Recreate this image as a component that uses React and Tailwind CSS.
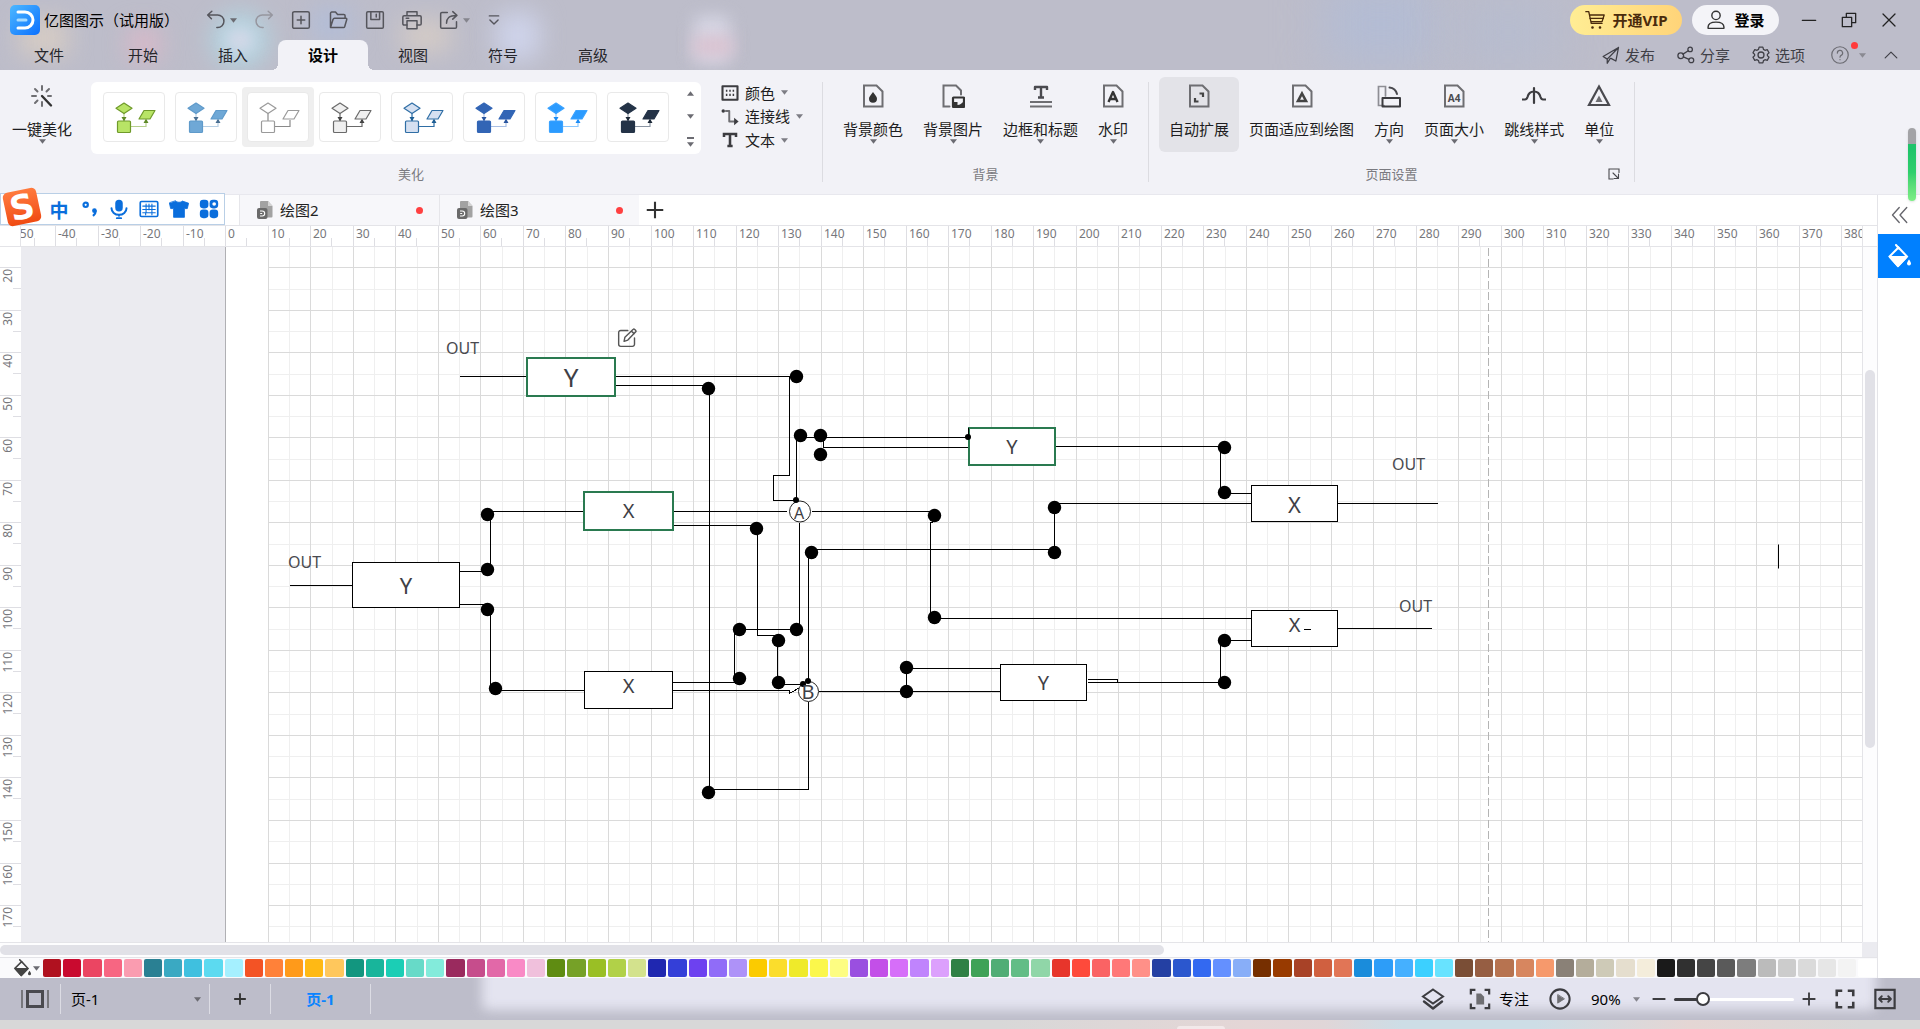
import React from "react";

/* ---------- shared icon helpers ---------- */

function Icon({ children, className = "h-5 w-5", sw = 1.5, box = 24 }) {
  return (
    <svg
      viewBox={`0 0 ${box} ${box}`}
      className={`shrink-0 ${className}`}
      fill="none"
      stroke="currentColor"
      strokeWidth={sw}
      strokeLinecap="round"
      strokeLinejoin="round"
      aria-hidden="true"
    >
      {children}
    </svg>
  );
}

function Caret({ className = "text-[#6b6b72]" }) {
  return (
    <svg viewBox="0 0 8 5" className={`h-[5px] w-[7px] shrink-0 ${className}`} fill="currentColor" aria-hidden="true">
      <path d="M0 0h8L4 5z" />
    </svg>
  );
}

function PageOutline({ children }) {
  return (
    <Icon className="h-6 w-6 text-[#6e6e72]" sw={2}>
      <path d="M3 1.500h12.500l6 6v15H3z" strokeLinejoin="miter" />
      {children}
    </Icon>
  );
}

/* ---------- title bar ---------- */

const QUICK = [
  {
    name: "新建",
    art: (
      <>
        <rect x="2" y="2" width="20" height="20" rx="2" />
        <path d="M12 7.500v9M7.500 12h9" />
      </>
    ),
  },
  {
    name: "打开",
    art: <path d="M3 21V4a1.500 1.500 0 0 1 1.500-1.500H9l2.500 3H19A1.500 1.500 0 0 1 20.500 7v3M3 21l3-9.500A2 2 0 0 1 8 10h13.500a1 1 0 0 1 1 1.400L20 20a1.500 1.500 0 0 1-1.500 1H3z" />,
  },
  {
    name: "保存",
    art: (
      <>
        <rect x="2" y="2" width="20" height="20" rx="1.500" />
        <path d="M7 2v9.500h10.500V2M13.500 5v3.500" />
      </>
    ),
  },
  {
    name: "打印",
    art: (
      <>
        <path d="M6 7V2h12v5M6 18H2.500A1.500 1.500 0 0 1 1 16.500v-8A1.500 1.500 0 0 1 2.500 7h19A1.500 1.500 0 0 1 23 8.500v8a1.500 1.500 0 0 1-1.500 1.500H18" />
        <rect x="6" y="13" width="12" height="9.500" />
        <path d="M5 10h3" />
      </>
    ),
  },
];

function TitleGlow() {
  return (
    <div aria-hidden="true" className="pointer-events-none absolute inset-0 overflow-hidden">
      <div className="absolute top-5 left-5 h-9 w-12 bg-[#d6ccc4] blur-md" />
      <div className="absolute top-7 left-32 h-8 w-8 bg-[#d9b9c8] blur-md" />
      <div className="absolute top-3 left-[212px] h-14 w-14 rounded-full bg-[#b3d6e2] blur-md" />
      <div className="absolute top-7 left-[226px] h-6 w-7 rounded-full bg-[#d6d8e8] blur-sm" />
      <div className="absolute top-2 left-[312px] h-8 w-10 bg-[#b2bdd8] blur-md" />
      <div className="absolute top-5 left-[402px] h-8 w-12 bg-[#d4cbc6] blur-md" />
      <div className="absolute top-3 left-[496px] h-12 w-11 rounded-xl bg-[#ced3ea] blur-md" />
      <div className="absolute top-4 left-[694px] h-12 w-9 rounded-md bg-[#d6d6e4] blur-sm" />
      <div className="absolute top-9 left-[693px] h-5 w-10 bg-[#dac2d0] blur-sm" />
      <div className="absolute -top-4 left-[1325px] h-20 w-28 bg-[#b3bcd4] blur-xl" />
      <div className="absolute top-0 left-[1460px] h-16 w-24 bg-[#b6bccf] blur-xl" />
    </div>
  );
}

function TitleBar() {
  return (
    <div className="relative flex h-10 items-center pr-[11px] pl-[10px]">
      <svg viewBox="0 0 30 30" className="h-[30px] w-[30px] shrink-0" aria-hidden="true">
        <defs>
          <linearGradient id="brand" x1="0" y1="0" x2="1" y2="1">
            <stop offset="0" stopColor="#4db8ff" />
            <stop offset="1" stopColor="#0a70ff" />
          </linearGradient>
        </defs>
        <rect width="30" height="30" rx="5" fill="url(#brand)" />
        <path d="M8 7h7a8 8 0 0 1 0 16H8" fill="none" stroke="#fff" strokeWidth="3" strokeLinecap="round" />
        <path d="M8 15h8" stroke="#a8dcff" strokeWidth="3" strokeLinecap="round" />
      </svg>
      <h1 className="ml-1 text-[15px] whitespace-nowrap text-black">亿图图示（试用版）</h1>
      <div className="ml-[27px] flex items-center gap-[17px] text-[#55555c]">
        <button aria-label="撤销" className="flex items-center gap-1">
          <Icon sw={1.8}>
            <path d="M6.500 10.500L2 6l5-4.500M2.500 6H14a7 7 0 0 1 0 15h-1" />
          </Icon>
          <Caret />
        </button>
        <button aria-label="重做" className="text-[#96969f]">
          <Icon sw={1.8}>
            <path d="M17.500 10.500L22 6l-5-4.500M21.500 6H10a7 7 0 0 0 0 15h1" />
          </Icon>
        </button>
        {QUICK.map((q) => (
          <button key={q.name} aria-label={q.name}>
            <Icon sw={1.8}>{q.art}</Icon>
          </button>
        ))}
        <button aria-label="导出" className="flex items-center gap-1">
          <Icon sw={1.8}>
            <path d="M10 3H3.500A1.500 1.500 0 0 0 2 4.500v16A1.500 1.500 0 0 0 3.500 22h16a1.500 1.500 0 0 0 1.500-1.500V14M9 16c0-6 3-9.500 12-9.500M16.500 2l5 4.500-5 4.500" />
          </Icon>
          <Caret className="text-[#85858d]" />
        </button>
        <button aria-label="更多">
          <Icon className="h-[14px] w-[14px]" sw={2.4}>
            <path d="M4 5h16M5 12l7 7 7-7" />
          </Icon>
        </button>
      </div>
      <div className="ml-auto flex items-center gap-[10px]">
        <button className="flex h-[30px] w-28 items-center justify-center gap-2 rounded-full bg-linear-to-r from-[#ffed94] to-[#ffd479] text-[15px] font-bold text-[#4a2b0c]">
          <Icon className="h-5 w-5" sw={1.6}>
            <path d="M1 2h3.500l3 14h13M5.500 6H23l-2.500 8H7" />
            <path d="M6 10h16" />
            <circle cx="9" cy="21" r=".8" fill="currentColor" />
            <circle cx="18" cy="21" r=".8" fill="currentColor" />
          </Icon>
          开通VIP
        </button>
        <button className="flex h-[30px] w-[87px] items-center justify-center gap-2 rounded-full bg-[#f4f4f8] text-[15px] font-bold text-black">
          <Icon className="h-5 w-5 text-[#333]" sw={1.7}>
            <circle cx="12" cy="6.500" r="5" />
            <path d="M2.500 22v-1.500c0-4 4-6 9.500-6s9.500 2 9.500 6V22z" />
          </Icon>
          登录
        </button>
        <div className="flex text-[#222]">
          <button aria-label="最小化" className="flex h-8 w-10 items-center justify-center">
            <Icon className="h-4 w-4" sw={2}>
              <path d="M2 12.500h20" />
            </Icon>
          </button>
          <button aria-label="还原" className="flex h-8 w-10 items-center justify-center">
            <Icon className="h-4 w-4" sw={1.9}>
              <path d="M2 8h14v14H2zM8 8V2h14v14h-6" />
            </Icon>
          </button>
          <button aria-label="关闭" className="flex h-8 w-10 items-center justify-center">
            <Icon className="h-4 w-4" sw={1.9}>
              <path d="M3 3l18 18M21 3L3 21" />
            </Icon>
          </button>
        </div>
      </div>
    </div>
  );
}

const MENU = ["开始", "插入", "设计", "视图", "符号", "高级"];

function MenuTabs() {
  return (
    <div className="relative flex h-[30px] items-stretch pr-[22px] text-[15px] text-[#26262b]">
      <nav className="flex">
        <button className="w-[98px]">文件</button>
        {MENU.map((m) =>
          m === "设计" ? (
            <button
              key={m}
              className="relative w-[90px] rounded-t-lg bg-[#f2f2f7] font-bold text-black before:absolute before:bottom-0 before:-left-1.5 before:h-1.5 before:w-1.5 before:bg-[radial-gradient(circle_at_0_0,transparent_6px,#f2f2f7_6px)] after:absolute after:-right-1.5 after:bottom-0 after:h-1.5 after:w-1.5 after:bg-[radial-gradient(circle_at_100%_0,transparent_6px,#f2f2f7_6px)]"
            >
              {m}
            </button>
          ) : (
            <button key={m} className="w-[90px]">
              {m}
            </button>
          )
        )}
      </nav>
      <div className="ml-auto flex items-center gap-[22px] text-[#3f3f46]">
        <button className="flex items-center gap-[5px]">
          <Icon className="h-[18px] w-[18px]" sw={1.7}>
            <path d="M22 2L1.500 14l5.500 3.500L22 2l-3.500 18-6.500-3.500M7 17.500V23l4-6.500" />
          </Icon>
          发布
        </button>
        <button className="flex items-center gap-[5px]">
          <Icon className="h-[18px] w-[18px]" sw={1.7}>
            <circle cx="5" cy="13" r="3.800" />
            <circle cx="17.500" cy="4.500" r="3" />
            <circle cx="19" cy="19" r="3.300" />
            <path d="M8 10.800l7-4.500M8.500 14.500l7.500 3.300" />
          </Icon>
          分享
        </button>
        <button className="flex items-center gap-[5px]">
          <Icon className="h-[18px] w-[18px]" sw={1.7}>
            <circle cx="12" cy="12" r="4" />
            <path d="M9.500 1.500h5l.8 3 2 1.200 3-.9 2.400 4.200-2.200 2.200v1.600l2.200 2.200-2.400 4.200-3-.9-2 1.200-.8 3h-5l-.8-3-2-1.200-3 .9L1.300 15l2.200-2.200v-1.600L1.300 9l2.400-4.200 3 .9 2-1.200z" />
          </Icon>
          选项
        </button>
        <button aria-label="帮助" className="relative ml-1 flex items-center gap-[10px] text-[#6b6b72]">
          <Icon className="h-[18px] w-[18px]" sw={1.6}>
            <circle cx="12" cy="12" r="11" />
            <path d="M8.500 9.500a3.500 3.500 0 1 1 5 3c-1 .6-1.500 1.200-1.500 2.500M12 18v.3" />
          </Icon>
          <span className="absolute -top-1 left-5 h-[7px] w-[7px] rounded-full bg-[#ff3b3b]" />
          <Caret className="text-[#8a8a92]" />
        </button>
        <button aria-label="收起功能区" className="-ml-1">
          <Icon className="h-[14px] w-[14px]" sw={2}>
            <path d="M2 17L12 7l10 10" />
          </Icon>
        </button>
      </div>
    </div>
  );
}

/* ---------- ribbon ---------- */

const THEMES = [
  { fill: "#b8e466", stroke: "#6f9a2a", line: "#b7cf8e", tip: "#5f8a28" },
  { fill: "#6fa8d6", stroke: "#5f9aca", line: "#b7cfe4", tip: "#4a6f92" },
  { fill: "#ffffff", stroke: "#9a9a9a", line: "#8a8a8a", tip: "none", selected: true },
  { fill: "#f0f0f0", stroke: "#6a6a6a", line: "#6a6a6a", tip: "#444444" },
  { fill: "#d5e0f1", stroke: "#2f6ea5", line: "#2f6ea5", tip: "#1f5f95" },
  { fill: "#3265b5", stroke: "#3265b5", line: "#a9bfe4", tip: "#2a56a0" },
  { fill: "#2b9bff", stroke: "#3aa2ff", line: "#8cc8ff", tip: "#1d8cf5" },
  { fill: "#243347", stroke: "#243347", line: "#8b95a3", tip: "#1b2736" },
];

function ThemeArt({ t }) {
  return (
    <svg viewBox="0 0 60 48" className="h-12 w-[60px]" aria-hidden="true">
      <path d="M20 20v9M27 33.500h15V27" fill="none" stroke={t.line} strokeWidth="1.200" />
      <path d="M17.500 24h5L20 28.500zM39.500 30h5L42 25.500z" fill={t.tip} />
      <g fill={t.fill} stroke={t.stroke} strokeWidth="1.200" strokeLinejoin="round">
        <path d="M20 10l8 5.300-8 5.300-8-5.300z" />
        <rect x="13.500" y="28" width="13" height="11.500" rx="1" />
        <path d="M40 17.500h11l-5 8.500H35z" />
      </g>
    </svg>
  );
}

function RibbonButton({ label, icon, caret = true, active = false }) {
  return (
    <button
      className={`flex h-[75px] flex-col items-center rounded-md px-[10px] pt-[7px] text-[15px] leading-5 whitespace-nowrap text-[#1d1d21] ${
        active ? "bg-[#e3e3e8]" : ""
      }`}
    >
      {icon}
      <span className="mt-[11px]">{label}</span>
      {caret && <Caret />}
    </button>
  );
}

function Group({ label, children, launcher = false, className = "" }) {
  return (
    <section aria-label={label} className={`flex flex-col pt-[7px] ${className}`}>
      <div className="flex h-[75px]">{children}</div>
      <div className="mt-3 grid grid-cols-[1fr_auto_1fr] items-center text-[13px] leading-5 text-[#7a7a80]">
        <span />
        <span>{label}</span>
        {launcher ? (
          <button aria-label="页面设置选项" className="mr-1 justify-self-end text-[#4a4a4f]">
            <Icon className="h-3 w-3" sw={2.2}>
              <path d="M22 9V2H2v20h8" strokeLinejoin="miter" />
              <path d="M10 10l10 10M21 12v9h-9" />
            </Icon>
          </button>
        ) : (
          <span />
        )}
      </div>
    </section>
  );
}

const Divider = () => <div className="mt-3 h-[100px] w-px shrink-0 bg-[#dcdce1]" />;

const SMALL_TOOLS = [
  {
    name: "颜色",
    art: (
      <>
        <rect x="2" y="3" width="20" height="18" strokeWidth="2.800" />
        <path d="M6.500 9h2M11 9h2M15.500 9h2M6.500 14.500h2M11 14.500h2M15.500 14.500h2" strokeWidth="2.800" strokeLinecap="butt" />
      </>
    ),
  },
  {
    name: "连接线",
    art: (
      <>
        <path d="M6.500 4H11v14h7" stroke="#6e6e72" strokeWidth="2.600" />
        <circle cx="3" cy="4" r="2.300" fill="currentColor" stroke="none" />
        <path d="M17.500 13l6 5-6 5z" fill="currentColor" stroke="none" />
      </>
    ),
  },
  {
    name: "文本",
    art: <path d="M4 8V4h16v4M12 4v16M8.500 20h7" strokeWidth="3.400" strokeLinecap="butt" strokeLinejoin="miter" />,
  },
];

function Ribbon() {
  return (
    <div className="flex h-[125px] shrink-0 border-b border-[#e8e8ee] bg-[#f2f2f7]">
      <Group label="美化" className="w-[822px] shrink-0">
        <div className="ml-[2px] flex w-20 justify-center">
          <RibbonButton
            label="一键美化"
            icon={
              <Icon className="h-6 w-6 text-[#6e6e72]" sw={2}>
                <path d="M12 2v4M12 18v4M2 12h4M18 12h3M5 5l2.500 2.500M19 5l-2.500 2.500M5 19l2.500-2.500" />
                <path d="M12 12l9 9.500" stroke="#333" strokeWidth="2.400" />
              </Icon>
            }
          />
        </div>
        <div className="mt-[5px] ml-[9px] flex h-[72px] items-start rounded-md bg-white px-[7px] pt-[5px]">
          {THEMES.map((t, i) => (
            <button
              key={i}
              aria-label={`主题 ${i + 1}`}
              className={`flex h-[60px] w-[72px] items-center justify-center rounded ${t.selected ? "bg-[#efefef]" : ""}`}
            >
              <span className="flex h-[50px] w-[62px] items-center justify-center rounded border border-[#e9e9e9] bg-white">
                <ThemeArt t={t} />
              </span>
            </button>
          ))}
          <div className="flex h-[60px] w-5 flex-col items-end justify-between pt-1 text-[#6b6b72]">
            <button aria-label="上一行" className="rotate-180">
              <Caret />
            </button>
            <button aria-label="下一行">
              <Caret />
            </button>
            <button aria-label="展开主题库" className="flex flex-col items-center gap-[3px]">
              <span className="h-[2px] w-[7px] bg-[#6b6b72]" />
              <Caret />
            </button>
          </div>
        </div>
        <div className="mt-1 ml-5 flex flex-col text-[15px] text-[#1d1d21]">
          {SMALL_TOOLS.map((s) => (
            <button key={s.name} className="flex h-6 items-center gap-[6px]">
              <Icon className="h-[18px] w-[18px] text-[#3c3c40]">{s.art}</Icon>
              {s.name}
              <Caret className="text-[#7d7d84]" />
            </button>
          ))}
        </div>
      </Group>
      <Divider />
      <Group label="背景" className="px-[10px]">
        <RibbonButton
          label="背景颜色"
          icon={
            <PageOutline>
              <path d="M12 8c2.500 3.300 4 4.800 4 6.800a4 4 0 0 1-8 0c0-2 1.500-3.500 4-6.800z" fill="#333" stroke="none" />
            </PageOutline>
          }
        />
        <RibbonButton
          label="背景图片"
          icon={
            <Icon className="h-6 w-6 text-[#6e6e72]" sw={2}>
              <path d="M8.500 22.500H2.500v-21H15l5 5v4" strokeLinejoin="miter" />
              <rect x="12" y="13.500" width="11" height="9.500" rx=".5" stroke="#333" fill="none" strokeWidth="2.200" />
              <path d="M12 18h4.500v3c2.500 0 4-1.500 6.500-4v6H12z" fill="#333" stroke="none" />
            </Icon>
          }
        />
        <RibbonButton
          label="边框和标题"
          icon={
            <Icon className="h-6 w-6 text-[#6e6e72]" sw={2}>
              <path d="M6 6V3h12v3M12 3v10M9 13.500h6" stroke="#4a4a4f" strokeWidth="2.400" strokeLinecap="butt" />
              <path d="M1 18h22M1 22.500h22" strokeLinecap="butt" />
            </Icon>
          }
        />
        <RibbonButton
          label="水印"
          icon={
            <PageOutline>
              <path d="M7.500 18L12 8l4.500 10M9 15h6" stroke="#333" strokeWidth="2.400" strokeLinecap="butt" />
            </PageOutline>
          }
        />
      </Group>
      <Divider />
      <Group label="页面设置" launcher className="px-[10px]">
        <RibbonButton
          label="自动扩展"
          active
          caret={false}
          icon={
            <PageOutline>
              <path d="M12.500 9.500H16v3.500M11.500 17.500H8V14" stroke="#444" strokeWidth="2.200" strokeLinecap="butt" strokeLinejoin="miter" />
            </PageOutline>
          }
        />
        <RibbonButton
          label="页面适应到绘图"
          caret={false}
          icon={
            <PageOutline>
              <path d="M12 9.500l4 7.500H8z" stroke="#444" strokeWidth="2.600" strokeLinejoin="miter" />
            </PageOutline>
          }
        />
        <RibbonButton
          label="方向"
          icon={
            <Icon className="h-6 w-6 text-[#6e6e72]" sw={2}>
              <path d="M7 21.500H1.500v-19h7V12" stroke="#8e8e94" strokeWidth="1.700" strokeLinejoin="miter" />
              <rect x="5.500" y="14" width="17.500" height="8.500" stroke="#3c3c40" />
              <path d="M12.500 3.500c4 .5 6.500 2.500 7.500 6.500" stroke="#4a4a4f" />
            </Icon>
          }
        />
        <RibbonButton
          label="页面大小"
          icon={
            <span className="relative">
              <PageOutline />
              <span className="absolute inset-0 flex items-center justify-center pt-[3px] text-[10px] leading-none font-bold text-[#4a4a4f]">
                A4
              </span>
            </span>
          }
        />
        <RibbonButton
          label="跳线样式"
          icon={
            <Icon className="h-6 w-6 text-[#3c3c40]" sw={2.2}>
              <path d="M0 15.500h3c1.500 0 2-1 2.500-2.500C6.500 9 9 7.500 12 7.500S17.500 9 18.500 13c.5 1.500 1 2.500 2.500 2.500h3M12 4v15" />
            </Icon>
          }
        />
        <RibbonButton
          label="单位"
          icon={
            <Icon className="h-6 w-6 text-[#4a4a4f]" sw={2.2}>
              <path d="M12 2.500L22 21H2z" strokeLinejoin="miter" />
              <path d="M12 11.500l3.500 6.500h-7z" fill="#6e6e72" stroke="none" />
            </Icon>
          }
        />
      </Group>
      <Divider />
    </div>
  );
}

/* ---------- input method bar floating above the tabs ---------- */

function ImeBar() {
  return (
    <div className="absolute top-[-2px] left-0 z-10 flex h-8 items-center gap-[10px] border border-[#b9cfe6] bg-white pr-[5px] pl-12 text-[#0a6edc]">
      <div
        aria-hidden="true"
        className="absolute -top-1 left-1 flex h-[34px] w-[34px] -rotate-12 items-center justify-center rounded-[5px] bg-linear-to-b from-[#ff7a3d] to-[#f04a10] font-['DejaVu_Sans'] text-[34px] leading-none font-bold text-white"
      >
        S
      </div>
      <button className="w-5 font-['Noto_Sans_CJK_SC'] text-[19px] leading-none font-bold">中</button>
      <button aria-label="标点" className="w-5">
        <Icon className="h-5 w-5" sw={2.6}>
          <circle cx="8" cy="7" r="2.600" />
          <circle cx="18.500" cy="14" r="2.800" fill="currentColor" stroke="none" />
          <path d="M20 14.500c0 2.500-1 4-2.500 5" />
        </Icon>
      </button>
      <button aria-label="语音">
        <Icon className="h-5 w-5" sw={2.4}>
          <rect x="7.500" y="1" width="9" height="14" rx="4.500" fill="currentColor" stroke="none" />
          <path d="M3 11a9 8 0 0 0 18 0M12 19v1M9.500 23h5" />
        </Icon>
      </button>
      <button aria-label="软键盘">
        <Icon className="h-5 w-5" sw={2}>
          <rect x="1.500" y="3" width="21" height="18" rx="1.500" />
          <path d="M4.500 8.500h15M4.500 12.500h15M4.500 16.500h15M8.500 6v10M12 6v7M15.500 6v13M8 16.500v2.500" strokeWidth="1.300" />
        </Icon>
      </button>
      <button aria-label="皮肤">
        <Icon className="h-5 w-5" sw={1}>
          <path d="M8 2.500c1 2 7 2 8 0L23.500 5 22 11.500h-3.500V22h-13V11.500H2L.5 5z" fill="currentColor" />
        </Icon>
      </button>
      <button aria-label="工具箱">
        <Icon className="h-5 w-5" sw={0}>
          <rect x="1" y="1" width="10.300" height="10.300" rx="4" fill="currentColor" />
          <rect x="1" y="12.700" width="10.300" height="10.300" rx="4" fill="currentColor" />
          <rect x="12.700" y="12.700" width="10.300" height="10.300" rx="4" fill="currentColor" />
          <rect x="12.700" y="1" width="10.300" height="10.300" rx="4" fill="currentColor" />
          <circle cx="18.200" cy="6" r="2.200" fill="#fff" />
        </Icon>
      </button>
    </div>
  );
}

function DocTab({ name }) {
  return (
    <button className="flex w-[200px] items-center border-l border-[#e6e6ea] bg-[#f7f7fa] pr-4 pl-[17px] text-[15px] text-[#222]">
      <svg viewBox="0 0 16 18" className="h-[18px] w-4" aria-hidden="true">
        <path d="M4 0h7l4.500 5v10.500a1 1 0 0 1-1 1H4a1 1 0 0 1-1-1V1a1 1 0 0 1 1-1z" fill="#a2a2a2" />
        <path d="M11 0l4.500 5H11z" fill="#d4d4d4" />
        <rect x="0" y="7" width="10.500" height="11" rx="2" fill="#6a6a6a" />
        <path d="M3 10h2.200a2.500 2.500 0 0 1 0 5H3M3.200 12.500h2" fill="none" stroke="#fff" strokeWidth="1.100" />
      </svg>
      <span className="ml-[7px]">{name}</span>
      <span className="ml-auto h-[7px] w-[7px] rounded-full bg-[#ff4040]" />
    </button>
  );
}

/* ---------- rulers and drawing page ---------- */

const STEP = 42.52;
const PAGE = { x: 225.3, y: 182.2 };
const VIEW = { x: 21, y: 247 };
const range = (a, b) => Array.from({ length: b - a + 1 }, (_, i) => a + i);
const gx = (n) => Math.round(PAGE.x + n * STEP);
const gy = (n) => Math.round(PAGE.y + n * STEP);

function TopRuler() {
  return (
    <div className="flex h-[21px] shrink-0 border-b border-[#e4e4e8]">
      <div className="w-[21px] shrink-0 border-r border-[#e4e4e8]" />
      <svg className="h-5 min-w-0 flex-1" shapeRendering="crispEdges" aria-label="水平标尺">
        {range(-5, 38).map((n) => (
          <g key={n} transform={`translate(${gx(n) - VIEW.x} 0)`}>
            <rect x="0" y="0" width="1" height="20" fill="#dedee3" />
            <rect x="21" y="12" width="1" height="8" fill="#dedee3" />
            <text x="3" y="12" fontSize="12" fill="#77777c">
              {n * 10}
            </text>
          </g>
        ))}
      </svg>
      <div className="w-[15px] shrink-0 border-l border-[#e4e4e8]" />
    </div>
  );
}

function SideRuler() {
  return (
    <svg className="h-full w-[21px] shrink-0 bg-white" shapeRendering="crispEdges" aria-label="垂直标尺">
      {range(2, 17).map((n) => (
        <g key={n} transform={`translate(0 ${gy(n) - VIEW.y})`}>
          <rect x="0" y="0" width="21" height="1" fill="#dedee3" />
          <rect x="13" y="21" width="8" height="1" fill="#dedee3" />
          <text transform="translate(12 2) rotate(-90)" textAnchor="end" fontSize="12" fill="#77777c">
            {n * 10}
          </text>
        </g>
      ))}
    </svg>
  );
}

const WIRES = [
  "459 376 527 376",
  "615 376 796 376",
  "615 385 708 385",
  "709 388 709 789 808 789 808 701",
  "789 376 789 475 773 475 773 500 796 500",
  "796 500 796 437 968 437",
  "823 437 823 447 969 447",
  "1055 446 1220 446 1220 493 1251 493",
  "584 511 490 511 490 571 459 571",
  "289 585 352 585",
  "459 604 490 604 490 690 584 690",
  "672 682 734 682 734 629 799 629 799 522",
  "672 690 789 690 789 693 803 685",
  "673 511 786 511",
  "673 525 757 525 757 635 777 635 777 684 803 684",
  "811 511 934 511",
  "932 520 932 522 930 522 930 618 1251 618",
  "808 681 808 549 1054 549 1054 503 1251 503",
  "818 691 1000 691",
  "906 691 906 668 1000 668",
  "1087 679 1117 679 1117 682",
  "1087 682 1220 682 1220 640 1251 640",
  "1337 503 1437 503",
  "1337 628 1431 628",
];

const DOTS = [
  [796, 376], [708, 388], [800, 435], [820, 435], [820, 454], [487, 514], [487, 569],
  [487, 609], [495, 688], [756, 528], [934, 515], [934, 617], [811, 552], [1054, 552],
  [1054, 507], [739, 629], [796, 629], [739, 678], [778, 640], [778, 682], [906, 667],
  [906, 691], [1224, 447], [1224, 492], [1224, 640], [1224, 682], [708, 792],
];

const PINS = [[796, 500], [968, 437], [808, 681], [803, 684]];

const BOXES = [
  { x: 526, y: 357, w: 90, h: 40, t: "Y", look: "border-2 border-[#2a7a50] text-[26px]" },
  { x: 583, y: 491, w: 91, h: 40, t: "X", look: "border-2 border-[#2a7a50] text-xl" },
  { x: 968, y: 427, w: 88, h: 39, t: "Y", look: "border-2 border-[#2a7a50] text-xl" },
  { x: 352, y: 562, w: 108, h: 46, t: "Y", look: "border border-black text-[22px]" },
  { x: 584, y: 671, w: 89, h: 38, t: "X", look: "border border-black pb-2 text-xl" },
  { x: 1000, y: 664, w: 87, h: 37, t: "Y", look: "border border-black text-xl" },
  { x: 1251, y: 485, w: 87, h: 37, t: "X", look: "border border-black text-[22px]" },
  { x: 1251, y: 610, w: 87, h: 37, t: "X", look: "border border-black pb-2 text-xl" },
];

const OUTS = [[446, 340], [288, 554], [1392, 456], [1399, 598]];

function Canvas() {
  return (
    <div className="relative min-w-0 flex-1 overflow-hidden bg-[#ebebf0]">
      <svg className="absolute inset-0 h-full w-full" aria-hidden="true">
        <g transform={`translate(${-VIEW.x} ${-VIEW.y})`}>
          <g shapeRendering="crispEdges">
            <rect x={gx(0)} y="0" width="4000" height="3000" fill="#fff" />
            {range(1, 60).map((n) => (
              <g key={n}>
                <rect x={gx(n + 0.5)} y="0" width="1" height="3000" fill="#efefef" />
                <rect x={gx(1)} y={gy(n + 0.5)} width="4000" height="1" fill="#efefef" />
              </g>
            ))}
            {range(1, 60).map((n) => (
              <g key={n}>
                <rect x={gx(n)} y="0" width="1" height="3000" fill="#dadada" />
                <rect x={gx(1)} y={gy(n)} width="4000" height="1" fill="#dadada" />
              </g>
            ))}
            <rect x={gx(0)} y="0" width="1" height="3000" fill="#b0b0b4" />
            <path d="M1488.500 248V3000" stroke="#b4b4b4" strokeDasharray="8 3" />
          </g>
          <g transform="translate(.5 .5)">
            <g fill="none" stroke="#000" shapeRendering="crispEdges">
              {WIRES.map((w) => (
                <polyline key={w} points={w} />
              ))}
            </g>
            {DOTS.map(([x, y]) => (
              <circle key={`${x}-${y}`} cx={x} cy={y} r="6.700" />
            ))}
            <g fill="#fff" stroke="#222" strokeWidth="1">
              <circle cx="799.500" cy="511" r="10.500" />
              <circle cx="808" cy="691" r="10" />
            </g>
            <path d="M1778 544v24" stroke="#000" />
          </g>
        </g>
      </svg>
      {BOXES.map((b) => (
        <div
          key={`${b.x}-${b.y}`}
          className={`absolute flex items-center justify-center bg-white leading-none text-[#3f3f46] ${b.look}`}
          style={{ left: b.x - VIEW.x, top: b.y - VIEW.y, width: b.w, height: b.h }}
        >
          {b.t}
        </div>
      ))}
      {OUTS.map(([x, y]) => (
        <span
          key={`${x}-${y}`}
          className="absolute text-base leading-4 text-[#4a4a4f]"
          style={{ left: x - VIEW.x, top: y - VIEW.y }}
        >
          OUT
        </span>
      ))}
      <svg className="pointer-events-none absolute inset-0 h-full w-full" aria-hidden="true">
        <g transform={`translate(${-VIEW.x} ${-VIEW.y})`}>
          <path d="M968.500 428v9" stroke="#000" />
          <path d="M1304 629.500h7" stroke="#000" />
          {PINS.map(([x, y]) => (
            <circle key={`${x}-${y}`} cx={x} cy={y} r="3" />
          ))}
        </g>
      </svg>
      <span className="absolute top-[258px] left-[768px] w-5 text-center text-base leading-4 text-[#3f3f46]">A</span>
      <span className="absolute top-[435px] left-[777px] w-5 text-center text-xl leading-5 text-[#3f3f46]">B</span>
      <button aria-label="编辑" className="absolute top-[81px] left-[596px] text-[#555]">
        <Icon className="h-5 w-5" sw={1.7}>
          <path d="M13 3H4.500A2.500 2.500 0 0 0 2 5.500v14A2.500 2.500 0 0 0 4.500 22h14a2.500 2.500 0 0 0 2.500-2.500V12" />
          <path d="M8.500 16l1-5 10-9.500a1 1 0 0 1 1.500 0L22.500 3a1 1 0 0 1 0 1.500L13 14.500z M17.500 4l3 3" />
        </Icon>
      </button>
    </div>
  );
}

/* ---------- palette and status bar ---------- */

const COLORS =
  "b0111f c90a2f eb4562 f76682 fa9cb0 2a8093 3aa9c2 3fc0df 5cdaf0 a5f0ff f35325 ff8139 ff9a1a ffb914 ffc75c 12967f 18b59b 1bceb5 67dac8 83ebdb 9a2a5e c64d8c e268a8 f98ac6 f0c0dc 5f8c12 76a127 9abf25 b1d148 d3e28d 1f27b0 343fd8 6d41f0 906cf8 ae92f8 fbcb00 fbdd2c efea2a fbf74b fdfd82 9a4fe0 c34fe8 d66ef9 c084fd dca0fd 2f8045 3fa257 51ad76 63bd86 90d6a8 e7352b fe4a3b fa6364 ff7878 ff9088 2440a3 2b57ce 3369f1 6490ff 88aef8 762f00 983a00 a84227 d06040 e17556 1a8cdb 2d9df8 45b0ff 3cd0ff 68e3ff 7a4e36 965e43 b77350 d7865f f6996c 8a8177 b4ad9b cecab7 e5dece f4eddb 1a1a1a 303030 454545 5a5a5a 7d7d7d bbbbbb cccccc dadada e6e6e6 f3f3f3 ffffff".split(
    " "
  );

function Bucket({ className }) {
  return (
    <Icon className={className} sw={2}>
      <path d="M9 1l3 3.500" />
      <path d="M11.500 3.500L20 12.500 11 22 2.500 12.500z" strokeLinejoin="miter" />
      <path d="M3 13h16.500L11 22z" fill="currentColor" />
      <path d="M22 15.500c1.400 2 2 3 2 4a2 2 0 0 1-4 0c0-1 .6-2 2-4z" fill="currentColor" stroke="none" />
    </Icon>
  );
}

function Palette() {
  return (
    <div className="flex h-[21px] shrink-0 items-center border-t border-[#e4e4e8] bg-[#fafafc] pr-px pl-[13px]">
      <button aria-label="填充颜色" className="flex w-[30px] items-center gap-[2px] text-[#444]">
        <Bucket className="h-[18px] w-[18px]" />
        <Caret />
      </button>
      <div className="flex h-[18px] flex-1 gap-0.5">
        {COLORS.map((c) => (
          <button key={c} aria-label={`#${c}`} className="min-w-0 flex-1 rounded-xs" style={{ backgroundColor: `#${c}` }} />
        ))}
      </div>
    </div>
  );
}

function StatusBar() {
  return (
    <footer className="relative flex h-[42px] shrink-0 items-center overflow-hidden bg-[#bdbdca] pr-6 text-[15px] text-black">
      <div aria-hidden="true" className="absolute -top-4 right-11 left-[482px] h-12 rounded-md bg-[#e4e4f0] blur-[6px]" />
      <div className="relative flex h-[30px] items-center divide-x divide-[#dcdce4] border-r border-[#dcdce4]">
        <div className="flex h-[30px] w-[61px] items-center pl-[21px]">
          <button aria-label="页面列表" className="text-[#4a4a4f]">
            <Icon className="h-7 w-7" box={28} sw={1.5}>
              <rect x="6.500" y="6.500" width="15" height="15" strokeWidth="3" strokeLinejoin="miter" />
              <path d="M1 5v18M27 5v18" stroke="#77777c" strokeWidth="2" strokeLinecap="butt" />
            </Icon>
          </button>
        </div>
        <label className="flex h-[30px] w-[149px] items-center pr-2 pl-[10px]">
          <select aria-label="当前页面" className="min-w-0 flex-1 appearance-none bg-transparent outline-none">
            <option>页-1</option>
          </select>
          <Caret />
        </label>
        <button aria-label="新增页面" className="flex h-[30px] w-[61px] items-center justify-center text-[#333]">
          <Icon className="h-[14px] w-[14px]" sw={3.2}>
            <path d="M12 2v20M2 12h20" strokeLinecap="butt" />
          </Icon>
        </button>
        <button className="flex h-[30px] w-[99px] items-center justify-center font-bold text-[#0a84ff]">页-1</button>
      </div>
      <div className="relative ml-auto flex items-center text-[#3c3c40]">
        <button aria-label="图层">
          <Icon className="h-6 w-6" sw={2}>
            <path d="M12 2.500l10 7-10 7-10-7z" strokeLinejoin="miter" />
            <path d="M3 14.500l9 7 9-7" strokeWidth="2.400" />
          </Icon>
        </button>
        <button className="ml-6 flex items-center gap-2 text-black">
          <Icon className="h-[22px] w-[22px] text-[#3c3c40]" sw={2.4}>
            <path d="M2 7V2h5M17 2h5v5M22 17v5h-5M7 22H2v-5" strokeLinecap="butt" strokeLinejoin="miter" />
            <path d="M8 6h5l3.500 3.500V18H8z" fill="#6e6e72" stroke="none" />
          </Icon>
          专注
        </button>
        <button aria-label="演示" className="ml-5">
          <Icon className="h-[22px] w-[22px]" sw={2.2}>
            <circle cx="12" cy="12" r="10.500" />
            <path d="M9.500 7.500v9l7-4.500z" fill="#6e6e72" stroke="#6e6e72" strokeWidth="1" />
          </Icon>
        </button>
        <label className="ml-5 flex items-center text-black">
          <select aria-label="缩放比例" className="w-[42px] appearance-none bg-transparent outline-none">
            <option>90%</option>
          </select>
          <Caret className="text-[#85858d]" />
        </label>
        <button aria-label="缩小" className="ml-3">
          <Icon className="h-[14px] w-[14px]" sw={3.4}>
            <path d="M1 12h22" strokeLinecap="butt" />
          </Icon>
        </button>
        <input
          type="range"
          aria-label="缩放"
          min="0"
          max="100"
          defaultValue="21"
          className="mx-2 h-[3px] w-[120px] appearance-none rounded bg-[linear-gradient(to_right,#3c3c40_24%,#ffffff_24%)] [&::-webkit-slider-thumb]:h-[14px] [&::-webkit-slider-thumb]:w-[14px] [&::-webkit-slider-thumb]:appearance-none [&::-webkit-slider-thumb]:rounded-full [&::-webkit-slider-thumb]:border-2 [&::-webkit-slider-thumb]:border-[#3c3c40] [&::-webkit-slider-thumb]:bg-white"
        />
        <button aria-label="放大">
          <Icon className="h-[14px] w-[14px]" sw={3.2}>
            <path d="M12 1v22M1 12h22" strokeLinecap="butt" />
          </Icon>
        </button>
        <button aria-label="全屏" className="ml-[18px]">
          <Icon className="h-[22px] w-[22px]" sw={2.8}>
            <path d="M3 9V3h6M15 3h6v6M21 15v6h-6M9 21H3v-6" strokeLinecap="butt" strokeLinejoin="miter" />
          </Icon>
        </button>
        <button aria-label="适应宽度" className="ml-[18px]">
          <Icon className="h-[22px] w-[22px]" sw={2.4}>
            <rect x="1.500" y="2" width="21" height="20" strokeLinejoin="miter" />
            <path d="M6 12h12M8.500 9L5.500 12l3 3M15.500 9l3 3-3 3" strokeWidth="2" />
          </Icon>
        </button>
      </div>
    </footer>
  );
}

export default function App() {
  return (
    <div className="relative flex h-screen flex-col overflow-hidden bg-white font-['Noto_Sans','Noto_Sans_CJK_SC',sans-serif]">
      <header className="relative shrink-0 bg-[#bdbdca]">
        <TitleGlow />
        <TitleBar />
        <MenuTabs />
      </header>
      <Ribbon />
      <main className="relative flex min-h-0 flex-1">
        <ImeBar />
        <div className="flex min-w-0 flex-1 flex-col">
          <div className="flex h-[31px] shrink-0 border-b border-[#e4e4e8] bg-white pl-[239px]">
            <DocTab name="绘图2" />
            <DocTab name="绘图3" />
            <button aria-label="新建绘图" className="pl-[7px] text-[#333]">
              <Icon className="h-[18px] w-[18px]" sw={2.8}>
                <path d="M12 1v22M1 12h22" strokeLinecap="butt" />
              </Icon>
            </button>
          </div>
          <TopRuler />
          <div className="flex min-h-0 flex-1">
            <SideRuler />
            <Canvas />
            <div className="w-[15px] shrink-0 border-l border-[#e4e4e8] bg-[#fdfdfe] px-[2px] pt-[123px]">
              <div className="h-[378px] w-[10px] rounded-full bg-[#e1e1e7]" />
            </div>
          </div>
          <div className="flex h-[15px] shrink-0">
            <div className="flex-1 border-t border-[#e4e4e8] bg-[#fdfdfe] pt-[2px]">
              <div className="h-[10px] w-5/8 rounded-full bg-[#e1e1e7]" />
            </div>
            <div className="w-[15px] bg-[#ebebf0]" />
          </div>
          <Palette />
        </div>
        <aside className="flex w-[43px] shrink-0 flex-col border-l border-[#e4e4e8] bg-white">
          <button aria-label="展开面板" className="flex h-[39px] items-center justify-center pl-[2px] text-[#66666c]">
            <Icon className="h-[18px] w-[18px]" sw={1.8}>
              <path d="M11 2L2 12l9 10M21 2l-9 10 9 10" />
            </Icon>
          </button>
          <button aria-label="填充" className="flex h-11 items-center justify-center bg-[#0080ff] text-white">
            <Bucket className="h-6 w-6" />
          </button>
        </aside>
      </main>
      <StatusBar />
      <div
        aria-hidden="true"
        className="flex h-[9px] shrink-0 items-end justify-center bg-[linear-gradient(to_right,#d8d8d8_52%,#e4d6d6_65%,#e0d6d8_69%,#cddde6_73%,#cddde6_80%,#e4d6d4_88%,#d8d8d8_97%)] pl-[482px]"
      >
        <div className="h-[3px] w-12 rounded-t bg-[#f2e9ea]" />
      </div>
      <div aria-hidden="true" className="absolute top-32 right-1 flex h-[73px] w-2 flex-col overflow-hidden rounded-full shadow">
        <div className="h-4 bg-[#a3a3a6]" />
        <div className="flex-1 bg-linear-to-b from-[#1fc46a] from-10% via-[#2fcf6d] to-[#7dee86]" />
      </div>
    </div>
  );
}
